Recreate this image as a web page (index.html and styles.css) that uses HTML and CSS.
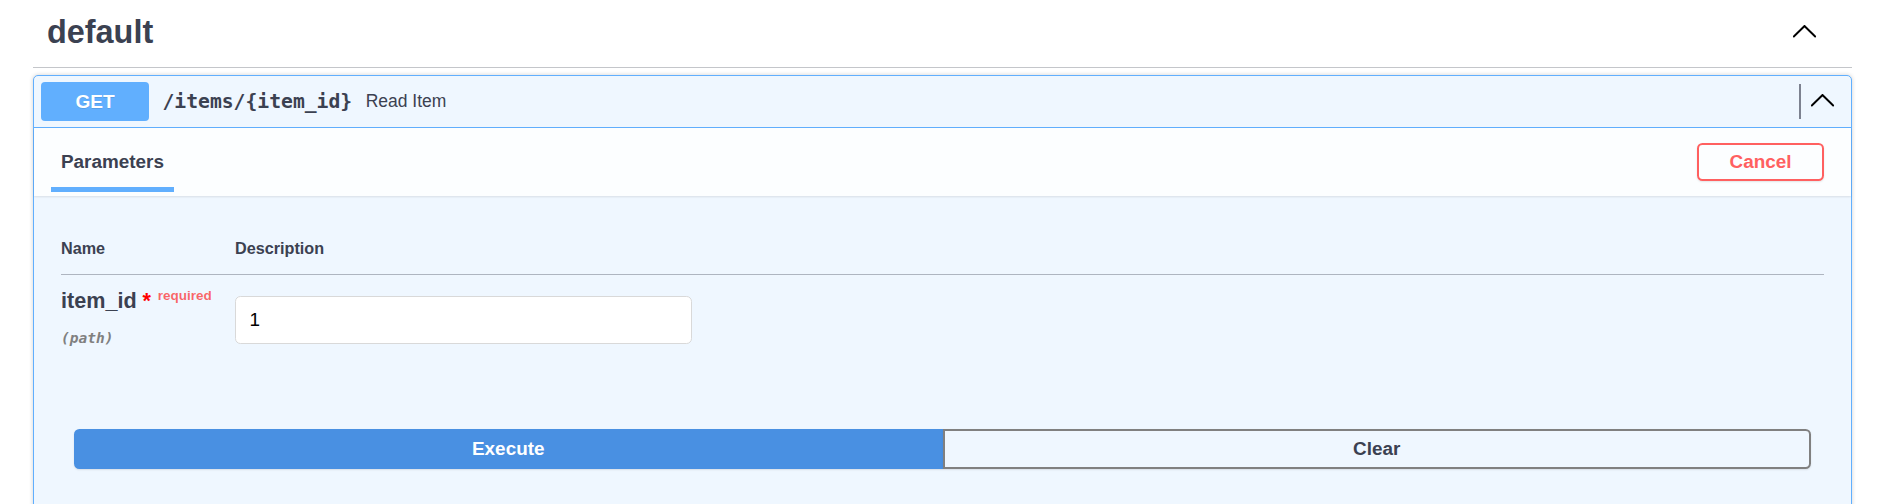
FILE: index.html
```html
<!DOCTYPE html>
<html lang="en">
<head>
<meta charset="utf-8">
<title>default</title>
<link rel="stylesheet" href="styles.css">
</head>
<body>
<div class="wrapper">
  <section class="tag-section">
    <h3 class="tag">
      <span class="tag-name">default</span>
      <button class="expand" aria-label="Collapse">
        <svg class="arrow" viewBox="0 0 20 20"><path d="M 17.418 14.908 C 17.69 15.176 18.127 15.176 18.397 14.908 C 18.667 14.64 18.668 14.207 18.397 13.939 L 10.489 6.109 C 10.219 5.841 9.782 5.841 9.51 6.109 L 1.602 13.939 C 1.332 14.207 1.332 14.64 1.602 14.908 C 1.873 15.176 2.311 15.176 2.581 14.908 L 10 7.767 L 17.418 14.908 Z"/></svg>
      </button>
    </h3>

    <div class="opblock">
      <div class="summary">
        <span class="method">GET</span>
        <span class="path">/items/{item_id}</span>
        <span class="desc">Read Item</span>
        <span class="sep"></span>
        <button class="ctrl-arrow" aria-label="Collapse operation">
          <svg class="arrow" viewBox="0 0 20 20"><path d="M 17.418 14.908 C 17.69 15.176 18.127 15.176 18.397 14.908 C 18.667 14.64 18.668 14.207 18.397 13.939 L 10.489 6.109 C 10.219 5.841 9.782 5.841 9.51 6.109 L 1.602 13.939 C 1.332 14.207 1.332 14.64 1.602 14.908 C 1.873 15.176 2.311 15.176 2.581 14.908 L 10 7.767 L 17.418 14.908 Z"/></svg>
        </button>
      </div>

      <div class="section-header">
        <div class="tab">
          <h4 class="tab-title">Parameters</h4>
          <div class="tab-bar"></div>
        </div>
        <button class="btn-cancel">Cancel</button>
      </div>

      <div class="params">
        <table class="param-table">
          <thead>
            <tr>
              <th class="col-name">Name</th>
              <th class="col-desc">Description</th>
            </tr>
          </thead>
          <tbody>
            <tr>
              <td class="col-name">
                <div class="param-name">item_id<span class="star">&nbsp;*</span><span class="req">required</span></div>
                <div class="param-in">(path)</div>
              </td>
              <td class="col-desc">
                <input class="param-input" type="text" value="1">
              </td>
            </tr>
          </tbody>
        </table>
      </div>

      <div class="btn-group">
        <button class="btn execute">Execute</button>
        <button class="btn clear">Clear</button>
      </div>
    </div>
  </section>
</div>
</body>
</html>
```
FILE: styles.css
```css
html, body {
  margin: 0;
  padding: 0;
  background: #ffffff;
}

body {
  font-family: "Liberation Sans", Arial, sans-serif;
  color: #3b4151;
  overflow: hidden;
}

.wrapper {
  padding: 0 31px 0 33px;
}

/* Tag header */
.tag {
  display: flex;
  align-items: flex-start;
  margin: 0;
  padding: 12px 34px 15px 14px;
  border-bottom: 1px solid rgba(59, 65, 81, 0.3);
}

.tag-name {
  flex: 1;
  font-size: 32.4px;
  font-weight: 700;
  line-height: 40px;
  color: #3b4151;
}

.expand {
  display: block;
  margin-top: 5px;
  padding: 0;
  border: 0;
  background: none;
  width: 27px;
  height: 27px;
}

.arrow {
  display: block;
  width: 27px;
  height: 27px;
  fill: #000;
}

/* Operation block */
.opblock {
  margin-top: 7px;
  border: 1px solid #61affe;
  border-radius: 5px;
  background: #eff7ff;
  box-shadow: 0 0 4px rgba(0, 0, 0, 0.19);
  padding-bottom: 80px;
}

.summary {
  display: flex;
  align-items: center;
  padding: 6px 7px;
  border-bottom: 1px solid #61affe;
}

.method {
  display: flex;
  align-items: center;
  justify-content: center;
  width: 108px;
  height: 39px;
  flex-shrink: 0;
  background: #61affe;
  border-radius: 4px;
  color: #fff;
  font-size: 19px;
  font-weight: 700;
  text-shadow: 0 1px 0 rgba(0, 0, 0, 0.1);
}

.path {
  padding: 0 13.5px;
  font-family: "DejaVu Sans Mono", "Liberation Mono", monospace;
  font-size: 19.7px;
  font-weight: 700;
  color: #3b4151;
}

.desc {
  flex: 1;
  font-size: 17.5px;
  color: #3b4151;
}

.sep {
  width: 2px;
  height: 35px;
  background: #7d8290;
}

.ctrl-arrow {
  display: block;
  margin: 0 8px 4px 8px;
  padding: 0;
  border: 0;
  background: none;
  width: 27px;
  height: 27px;
}

/* Section header with tab */
.section-header {
  display: flex;
  align-items: flex-start;
  justify-content: space-between;
  height: 68px;
  padding: 0 27px;
  background: rgba(255, 255, 255, 0.8);
  box-shadow: 0 1px 2px rgba(0, 0, 0, 0.1);
}

.tab {
  display: flex;
  flex-direction: column;
  align-items: center;
  padding-top: 22.6px;
}

.tab-title {
  margin: 0;
  font-size: 18.9px;
  font-weight: 700;
  line-height: 21.7px;
  color: #3b4151;
}

.tab-bar {
  width: 120%;
  height: 5px;
  flex-shrink: 0;
  margin-top: 14.7px;
  background: #61affe;
}

.btn-cancel {
  align-self: center;
  width: 127px;
  height: 38px;
  padding: 0;
  border: 2.7px solid #ff6060;
  border-radius: 5.4px;
  background: transparent;
  color: #ff6060;
  font-family: "Liberation Sans", Arial, sans-serif;
  font-size: 18.9px;
  font-weight: 700;
  box-shadow: 0 1px 2px rgba(0, 0, 0, 0.1);
}

/* Parameters table */
.params {
  padding: 27px 27px 0;
}

.param-table {
  width: 100%;
  border-collapse: collapse;
}

.param-table th {
  padding: 16.2px 0;
  font-size: 16.2px;
  font-weight: 700;
  line-height: 18.6px;
  text-align: left;
  color: #3b4151;
  border-bottom: 1px solid rgba(59, 65, 81, 0.2);
}

.param-table th.col-name,
.param-table td.col-name {
  width: 174px;
}

.param-table td {
  padding: 14px 0 13.5px;
  vertical-align: top;
  text-align: left;
}

.param-name {
  font-size: 21.6px;
  font-weight: 700;
  line-height: 24.8px;
  color: #3b4151;
  white-space: nowrap;
}

.star {
  color: red;
}

.req {
  padding: 0 6.75px;
  font-size: 13.5px;
  font-weight: 700;
  line-height: 0;
  color: rgba(255, 0, 0, 0.6);
  vertical-align: 8.3px;
}

.param-in {
  margin-top: 15.5px;
  font-family: "DejaVu Sans Mono", "Liberation Mono", monospace;
  font-size: 14.5px;
  font-weight: 700;
  font-style: italic;
  line-height: 19px;
  color: #808080;
}

.param-input {
  display: block;
  box-sizing: border-box;
  width: 457px;
  height: 48px;
  margin: 7px 0;
  padding: 0 13.5px;
  border: 1px solid #d9d9d9;
  border-radius: 5.4px;
  background: #fff;
  color: #000;
  font-family: "Liberation Sans", Arial, sans-serif;
  font-size: 18.9px;
}

/* Execute / Clear */
.btn-group {
  display: flex;
  padding: 65px 40px 0;
}

.btn {
  flex: 1;
  height: 39.7px;
  padding: 0;
  border: 2.7px solid #808080;
  font-family: "Liberation Sans", Arial, sans-serif;
  font-size: 18.9px;
  font-weight: 700;
  box-shadow: 0 1px 2px rgba(0, 0, 0, 0.1);
}

.execute {
  background: #4990e2;
  border-color: #4990e2;
  color: #fff;
  border-radius: 5.4px 0 0 5.4px;
}

.clear {
  background: transparent;
  color: #3b4151;
  border-radius: 0 5.4px 5.4px 0;
}
```
